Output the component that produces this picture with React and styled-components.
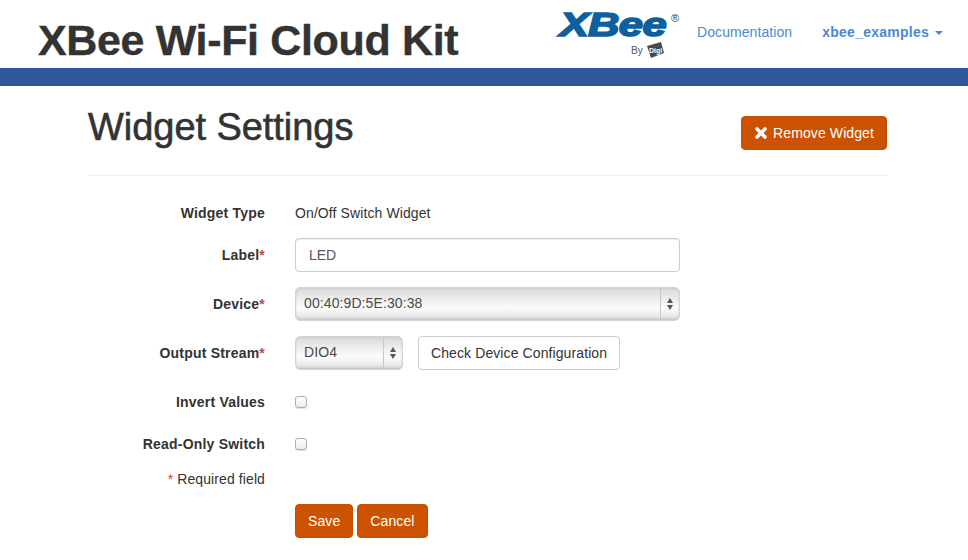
import React from "react";
import styled, { createGlobalStyle } from "styled-components";

const Global = createGlobalStyle`
  * { box-sizing: border-box; }
  html, body { margin: 0; padding: 0; background: #fff; overflow: hidden; }
  body {
    height: 560px;
    font-family: "Liberation Sans", Arial, sans-serif;
    font-size: 14px;
    color: #333;
  }
`;

const Header = styled.header`
  height: 68px;
  display: flex;
  align-items: flex-start;
  padding-left: 38px;
`;

const Brand = styled.div`
  font-size: 43px;
  font-weight: 700;
  line-height: 50px;
  padding-top: 15px;
  color: #333;
  flex: 1;
  letter-spacing: -0.35px;
  -webkit-text-stroke: 0.4px #333;
`;

const Logo = styled.div`
  width: 122px;
  height: 50px;
  margin-top: 11px;
  position: relative;
`;

const LogoMark = styled.div`
  font-size: 33px;
  font-weight: 700;
  font-style: italic;
  line-height: 28px;
  color: #0f5f9e;
  -webkit-text-stroke: 1.6px #0f5f9e;
  transform: scaleX(1.32);
  transform-origin: left;
  padding-left: 2px;
  letter-spacing: -0.5px;
`;

const Registered = styled.span`
  position: absolute;
  top: 1px;
  right: 0;
  font-size: 11px;
  color: #444;
`;

const ByLine = styled.div`
  display: flex;
  align-items: center;
  gap: 3px;
  margin-top: 2px;
  padding-left: 74px;
  font-size: 10px;
  color: #555;
`;

const Nav = styled.nav`
  display: flex;
  align-items: center;
  height: 64px;
`;

const NavLink = styled.a`
  font-size: 14px;
  font-weight: ${(p) => (p.$bold ? 700 : 400)};
  color: #4a89d0;
  letter-spacing: ${(p) => (p.$bold ? "0.25px" : "0.08px")};
  margin-left: ${(p) => (p.$bold ? "30px" : "18px")};
  margin-right: ${(p) => (p.$bold ? "25px" : "0")};
  display: flex;
  align-items: center;
`;

const Caret = styled.span`
  display: inline-block;
  margin-left: 6px;
  margin-top: 2px;
  border-top: 4px solid #4a89d0;
  border-left: 4px solid transparent;
  border-right: 4px solid transparent;
`;

const Stripe = styled.div`
  height: 18px;
  background: #31589c;
`;

const Page = styled.main`
  width: 800px;
  margin-left: 88px;
`;

const TitleRow = styled.div`
  display: flex;
  justify-content: space-between;
  align-items: flex-start;
  height: 90px;
  border-bottom: 1px solid #eee;
`;

const Title = styled.h1`
  margin: 21px 0 0;
  font-size: 38px;
  line-height: 40px;
  font-weight: 400;
  letter-spacing: -0.05px;
  color: #333;
  -webkit-text-stroke: 0.6px #333;
`;

const Btn = styled.button`
  font-family: inherit;
  font-size: 14px;
  line-height: 20px;
  height: 34px;
  padding: 0 ${(p) => p.$pad || 13}px;
  color: #fff;
  background: #cc5200;
  border: 1px solid #c44f00;
  border-radius: 4px;
  display: inline-flex;
  align-items: center;
  gap: 5px;
  letter-spacing: 0.1px;
`;

const RemoveBtn = styled(Btn)`
  margin: 30px 1px 0 0;
  padding: 0 12px;
`;

const Form = styled.form`
  display: grid;
  grid-template-columns: 177px 385px;
  column-gap: 30px;
  justify-content: start;
  padding-top: 20px;
`;

const Label = styled.label`
  font-weight: 700;
  text-align: right;
  height: ${(p) => p.$h}px;
  line-height: 34px;
  white-space: nowrap;
  letter-spacing: 0.2px;
`;

const Star = styled.span`
  color: #b94a48;
  font-weight: ${(p) => (p.$plain ? 400 : 700)};
`;

const Hint = styled.div`
  text-align: right;
  height: 41px;
  line-height: 20px;
  padding-top: 6px;
  letter-spacing: 0.1px;
`;

const Field = styled.div`
  height: ${(p) => p.$h}px;
  display: flex;
  align-items: flex-start;
  gap: 15px;
`;

const TextBox = styled.div`
  width: 385px;
  height: 34px;
  border: 1px solid #ccc;
  border-radius: 4px;
  padding: 0 13px;
  line-height: 32px;
  color: #555;
  box-shadow: inset 0 1px 1px rgba(0, 0, 0, 0.075);
`;

const Select = styled.div`
  width: ${(p) => p.$w}px;
  height: 34px;
  flex: none;
  display: flex;
  border: 1px solid #d4d4d4;
  border-radius: 5px;
  line-height: 30px;
  color: #4a4a4a;
  letter-spacing: 0.1px;
  background: linear-gradient(#d9d9d9 0, #eeeeee 35%, #fbfbfb 62%, #ececec 85%, #cfcfcf 100%);
  box-shadow: inset 0 0 2px rgba(0, 0, 0, 0.15);
`;

const SelectValue = styled.div`
  flex: 1;
  padding-left: 8px;
`;

const SelectArrows = styled.div`
  width: 19px;
  border-left: 1px solid #c8c8c8;
  display: flex;
  flex-direction: column;
  align-items: center;
  justify-content: center;
  gap: 2px;
  &::before,
  &::after {
    content: "";
    border-left: 3.5px solid transparent;
    border-right: 3.5px solid transparent;
  }
  &::before { border-bottom: 5px solid #555; }
  &::after { border-top: 5px solid #555; }
`;

const OutlineBtn = styled.button`
  font-family: inherit;
  font-size: 14px;
  height: 34px;
  padding: 0 12px;
  color: #333;
  background: #fff;
  border: 1px solid #ccc;
  border-radius: 4px;
  letter-spacing: 0.1px;
`;

const Check = styled.span`
  width: 12px;
  height: 12px;
  margin-top: 11px;
  border: 1px solid #adadad;
  border-radius: 3px;
  background: linear-gradient(#fff, #ececec);
  box-shadow: 0 1px 1px rgba(0, 0, 0, 0.12);
`;

const Actions = styled.div`
  display: flex;
  gap: 4px;
`;

const Plain = styled.div`
  line-height: 20px;
  padding-top: 7px;
  letter-spacing: 0.1px;
`;

export default function App() {
  return (
    <>
      <Global />
      <Header>
        <Brand>XBee Wi-Fi Cloud Kit</Brand>
        <Logo>
          <LogoMark>XBee</LogoMark>
          <Registered>®</Registered>
          <ByLine>
            By
            <svg width="19" height="18" viewBox="0 0 19 18">
              <path d="M1 5 15 1l3 11-13 5z" fill="#4a4a4a" />
              <text x="3" y="12" fontSize="7" fontWeight="700" fill="#fff" fontFamily="Liberation Sans">Digi</text>
            </svg>
          </ByLine>
        </Logo>
        <Nav>
          <NavLink>Documentation</NavLink>
          <NavLink $bold>
            xbee_examples<Caret />
          </NavLink>
        </Nav>
      </Header>
      <Stripe />
      <Page>
        <TitleRow>
          <Title>Widget Settings</Title>
          <RemoveBtn type="button">
            <svg width="14" height="14" viewBox="0 0 14 14">
              <path d="M3 3l8 8M11 3l-8 8" stroke="#fff" strokeWidth="3.6" strokeLinecap="round" />
            </svg>
            Remove Widget
          </RemoveBtn>
        </TitleRow>
        <Form>
          <Label $h={42}>Widget Type</Label>
          <Field $h={42}><Plain>On/Off Switch Widget</Plain></Field>

          <Label $h={49}>Label<Star>*</Star></Label>
          <Field $h={49}><TextBox>LED</TextBox></Field>

          <Label $h={49}>Device<Star>*</Star></Label>
          <Field $h={49}>
            <Select $w={385}><SelectValue>00:40:9D:5E:30:38</SelectValue><SelectArrows /></Select>
          </Field>

          <Label $h={49}>Output Stream<Star>*</Star></Label>
          <Field $h={49}>
            <Select $w={108}><SelectValue>DIO4</SelectValue><SelectArrows /></Select>
            <OutlineBtn type="button">Check Device Configuration</OutlineBtn>
          </Field>

          <Label $h={42}>Invert Values</Label>
          <Field $h={42}><Check /></Field>

          <Label $h={36}>Read-Only Switch</Label>
          <Field $h={36}><Check /></Field>

          <Hint><Star $plain>*</Star> Required field</Hint>
          <Field $h={41} />

          <div />
          <Actions>
            <Btn type="button" $pad={12}>Save</Btn>
            <Btn type="button" $pad={12}>Cancel</Btn>
          </Actions>
        </Form>
      </Page>
    </>
  );
}
